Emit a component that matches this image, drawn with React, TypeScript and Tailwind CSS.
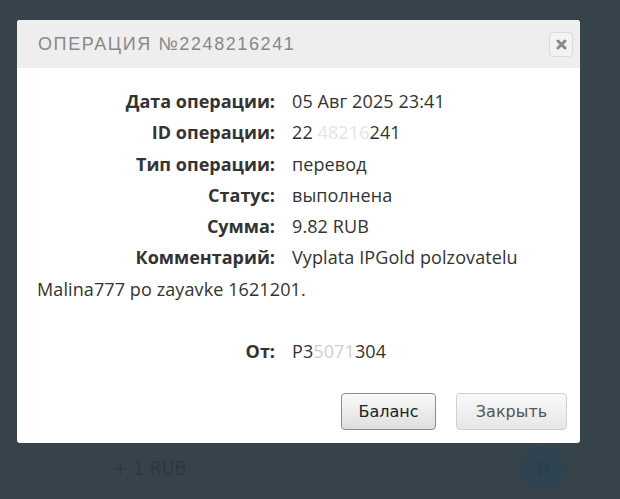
import React from 'react';

const rows: Array<{ label: string; value: React.ReactNode }> = [
  { label: 'Дата операции:', value: '05 Авг 2025 23:41' },
  {
    label: 'ID операции:',
    value: (
      <>
        22 <span className="text-[#e4e4e4]">48216</span>241
      </>
    ),
  },
  { label: 'Тип операции:', value: 'перевод' },
  { label: 'Статус:', value: 'выполнена' },
  { label: 'Сумма:', value: '9.82 RUB' },
  { label: 'Комментарий:', value: 'Vyplata IPGold polzovatelu Malina777 po zayavke 1621201.' },
];

export default function App() {
  return (
    <div className="relative w-[620px] h-[499px] overflow-hidden bg-[#36434b] font-['Open_Sans',sans-serif]">
      {/* страница под модалкой */}
      <div className="absolute left-0 right-0 top-[446px] flex items-center h-[44px]">
        <span className="ml-[113px] text-[19px] tracking-[0.2px] text-[#2c383f] font-['DejaVu_Sans_Condensed',sans-serif]">
          + 1 RUB
        </span>
        <span className="ml-[195px] text-[13px] text-[#3a464e]">--</span>
        <div className="ml-auto mr-[55px] w-[44px] h-[44px] rounded-full bg-[#2e4451] flex items-center justify-center text-[22px] text-[#2b3e49] font-bold">
          P
        </div>
      </div>

      {/* модальное окно */}
      <div className="absolute left-[17px] top-[20px] w-[563px] h-[423px] bg-white rounded-[3px] overflow-hidden flex flex-col">
        <div className="h-[48px] bg-[#eeeeee] flex items-center justify-between pl-[21px] pr-[7px]">
          <h2 className="text-[18px] tracking-[1.6px] text-[#888888] font-['Liberation_Sans',sans-serif] uppercase">
            Операция №2248216241
          </h2>
          <button className="w-[24px] h-[25px] rounded-[4px] border border-[#dadada] bg-[#f3f3f3] flex items-center justify-center">
            <svg width="11" height="11" viewBox="0 0 11 11">
              <path d="M2 2 L9 9 M9 2 L2 9" stroke="#8a8a8a" strokeWidth="3" strokeLinecap="round" />
            </svg>
          </button>
        </div>

        <div className="pt-[18px] pl-[20px] pr-[20px] text-[18px] leading-[31.3px] tracking-[0.1px] text-[#333333] font-['Open_Sans',sans-serif]">
          {rows.map((r) => (
            <p key={r.label}>
              <span className="inline-block w-[238px] mr-[17px] text-right font-bold tracking-normal">{r.label}</span>
              {r.value}
            </p>
          ))}
          <p>&nbsp;</p>
          <p>
            <span className="inline-block w-[238px] mr-[17px] text-right font-bold tracking-normal">От:</span>
            P3<span className="text-[#cfcfcf]">5071</span>304
          </p>
        </div>

        <div className="mt-auto mb-[13px] mr-[13px] flex justify-end gap-[20px] font-['DejaVu_Sans',sans-serif] text-[16px]">
          <button className="w-[95px] h-[37px] rounded-[4px] border border-[#8c8c8c] bg-gradient-to-b from-[#fafafa] to-[#dedede] text-[#222222]">
            Баланс
          </button>
          <button className="w-[111px] h-[37px] rounded-[4px] border border-[#d0d0d0] bg-gradient-to-b from-[#f9f9f9] to-[#e6e6e6] text-[#555555]">
            Закрыть
          </button>
        </div>
      </div>
    </div>
  );
}
